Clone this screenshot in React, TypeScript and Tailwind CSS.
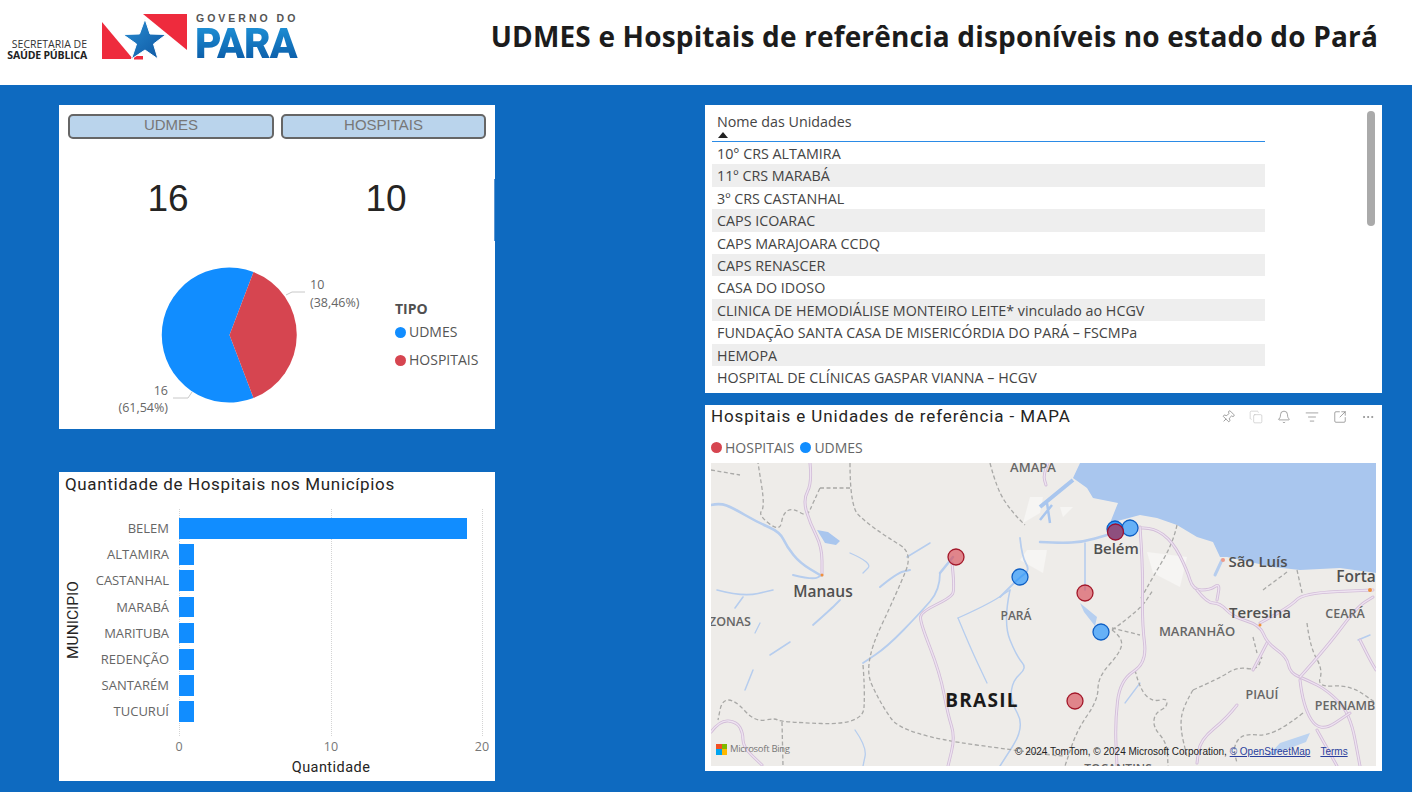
import React from "react";
import { Pin, Copy, Bell, ListFilter, SquareArrowOutUpRight, MoreHorizontal } from "lucide-react";

const rows = [
  "10° CRS ALTAMIRA",
  "11º CRS MARABÁ",
  "3º CRS CASTANHAL",
  "CAPS ICOARAC",
  "CAPS MARAJOARA CCDQ",
  "CAPS RENASCER",
  "CASA DO IDOSO",
  "CLINICA DE HEMODIÁLISE MONTEIRO LEITE* vinculado ao HCGV",
  "FUNDAÇÃO SANTA CASA DE MISERICÓRDIA DO PARÁ – FSCMPa",
  "HEMOPA",
  "HOSPITAL DE CLÍNICAS GASPAR VIANNA – HCGV",
];

const bars: [string, number][] = [
  ["BELEM", 19],
  ["ALTAMIRA", 1],
  ["CASTANHAL", 1],
  ["MARABÁ", 1],
  ["MARITUBA", 1],
  ["REDENÇÃO", 1],
  ["SANTARÉM", 1],
  ["TUCURUÍ", 1],
];

function Logo() {
  return (
    <div className="flex items-start">
      <div className="w-[87px] mt-[39px] text-right text-[10.500px] leading-[11px] text-[#333] whitespace-nowrap font-['Open_Sans',sans-serif]">
        <div className="tracking-[0px]">SECRETARIA DE</div>
        <div className="font-bold text-[#222] tracking-[-0.2px]">SAÚDE PÚBLICA</div>
      </div>
      <svg width="90" height="50" viewBox="100 12 90 50" className="ml-[13px] mt-[12px] shrink-0">
        <defs>
          <linearGradient id="star" x1="0" y1="0" x2="1" y2="1">
            <stop offset="0" stopColor="#2a8fd4" />
            <stop offset="1" stopColor="#0d55a0" />
          </linearGradient>
        </defs>
        <polygon points="102,22 102,59 133,59" fill="#ee2b3d" />
        <polygon points="143,14 187,14 187,50" fill="#ee2b3d" />
        <polygon points="134,56 143,56 143,59.500 134,59.500" fill="#ee2b3d" />
        <polygon
          points="145,19 150,34 166,34.500 153.500,44 158,59 145,50 131.500,59 136.500,44 123,34.500 139.500,34"
          fill="url(#star)"
          stroke="#fff"
          strokeWidth="1"
        />
      </svg>
      <div className="ml-[5px] mt-[13px] w-[106px] relative">
        <div className="pl-[1px] text-[10.500px] leading-[11px] font-bold tracking-[3px] text-[#555] whitespace-nowrap font-['Liberation_Sans',sans-serif]">
          GOVERNO DO
        </div>
        <div className="text-[43px] leading-[38px] font-black tracking-[-1px] text-transparent bg-clip-text bg-gradient-to-b from-[#1f93d8] to-[#0b5aa6] whitespace-nowrap font-['Roboto',sans-serif] scale-x-[0.95] origin-left w-[112px]">
          PARA
        </div>
        <span className="absolute left-[95px] top-[16px] h-[9px] w-[2px] bg-white -rotate-[14deg]" />
      </div>
    </div>
  );
}

function Header() {
  return (
    <header className="h-[85px] bg-white flex items-start justify-between pr-[34px]">
      <Logo />
      <h1 className="mt-[16px] text-[28px] leading-[40px] font-bold tracking-[0.17px] text-[#1c1c1c] whitespace-nowrap font-['Open_Sans',sans-serif]">
        UDMES e Hospitais de referência disponíveis no estado do Pará
      </h1>
    </header>
  );
}

function PiePanel() {
  return (
    <section className="relative h-[324px] bg-white">
      <span className="absolute right-0 top-[74px] h-[62px] w-[1px] bg-[#5b95d0]" />
      <div className="flex gap-[7px] pt-[9px] pl-[9px] font-['Liberation_Sans',sans-serif]">
        <button className="w-[206px] h-[25px] pb-[3px] rounded-[5px] border-2 border-[#666] bg-[#bad4ec] text-[15px] leading-[18px] text-[#777]">
          UDMES
        </button>
        <button className="w-[205px] h-[25px] pb-[3px] rounded-[5px] border-2 border-[#666] bg-[#bad4ec] text-[15px] leading-[18px] text-[#777]">
          HOSPITAIS
        </button>
      </div>
      <div className="grid grid-cols-2 mt-[40px] text-center text-[37px] leading-[40px] text-[#252423] font-['Liberation_Sans',sans-serif]">
        <div>16</div>
        <div>10</div>
      </div>
      <div className="flex mt-[36px]">
        <svg width="271" height="174" viewBox="109 255 271 174" className="ml-[50px] shrink-0 font-['Open_Sans',sans-serif]">
          <path d="M229.500 335 L253.500 272 A67.500 67.500 0 1 0 253.500 398 Z" fill="#118dff" />
          <path d="M229.500 335 L253.500 272 A67.500 67.500 0 0 1 253.500 398 Z" fill="#d64550" />
          <polyline points="286,295 292,292 305,292" fill="none" stroke="#c8c8c8" />
          <polyline points="173,398 188,398 192,392" fill="none" stroke="#c8c8c8" />
          <text x="310" y="289" fontSize="12.500" fill="#666">10</text>
          <text x="310" y="307" fontSize="12.500" fill="#666">(38,46%)</text>
          <text x="168" y="395" fontSize="12.500" fill="#666" textAnchor="end">16</text>
          <text x="168" y="412" fontSize="12.500" fill="#666" textAnchor="end">(61,54%)</text>
        </svg>
        <div className="ml-[15px] pt-[44px] font-['Open_Sans',sans-serif] text-[14px] text-[#555]">
          <div className="font-bold leading-[20px] text-[#505050]">TIPO</div>
          <div className="mt-[3px] flex items-center gap-[3px] leading-[20px]">
            <span className="w-[11px] h-[11px] rounded-full bg-[#118dff]" />
            UDMES
          </div>
          <div className="mt-[8px] flex items-center gap-[3px] leading-[20px]">
            <span className="w-[11px] h-[11px] rounded-full bg-[#d64550]" />
            HOSPITAIS
          </div>
        </div>
      </div>
    </section>
  );
}

function BarPanel() {
  return (
    <section className="relative h-[309px] mt-[43px] bg-white">
      <h2 className="pl-[6px] pt-[1px] text-[17px] leading-[22px] tracking-[0.65px] text-[#252423] whitespace-nowrap font-['Roboto',sans-serif]">
        Quantidade de Hospitais nos Municípios
      </h2>
      <div className="absolute left-[120px] top-[37px] h-[227px] w-[303px]">
        <span className="absolute left-0 top-0 h-full border-l border-dotted border-[#d4d4d4]" />
        <span className="absolute left-[152px] top-0 h-full border-l border-dotted border-[#d4d4d4]" />
        <span className="absolute left-[303px] top-0 h-full border-l border-dotted border-[#d4d4d4]" />
      </div>
      <span className="absolute left-[14px] top-[148px] -translate-x-1/2 -translate-y-1/2 -rotate-90 text-[15.500px] leading-[16px] text-[#252423] whitespace-nowrap font-['Roboto',sans-serif]">
        MUNICIPIO
      </span>
      <div className="relative mt-[23px] flex flex-col gap-[5.500px] font-['Open_Sans',sans-serif]">
        {bars.map(([name, v]) => (
          <div key={name} className="flex items-start h-[20.700px]">
            <div className="w-[110px] text-right text-[13px] leading-[21px] text-[#666] whitespace-nowrap">
              {name}
            </div>
            <div className="ml-[10px] h-full bg-[#118dff]" style={{ width: v * 15.15 }} />
          </div>
        ))}
      </div>
      <div className="relative h-[16px] mt-[17px] text-[12.500px] leading-[16px] text-[#777] font-['Open_Sans',sans-serif]">
        <span className="absolute left-[120px] -translate-x-1/2">0</span>
        <span className="absolute left-[272px] -translate-x-1/2">10</span>
        <span className="absolute left-[423px] -translate-x-1/2">20</span>
      </div>
      <div className="ml-[120px] w-[304px] mt-[4px] text-center text-[14.500px] leading-[18px] tracking-[0.45px] text-[#252423] font-['Roboto',sans-serif]">
        Quantidade
      </div>
    </section>
  );
}

function TablePanel() {
  return (
    <section className="relative h-[288px] bg-white overflow-hidden font-['Open_Sans',sans-serif]">
      <span className="absolute right-[7px] top-[6px] w-[8px] h-[115px] rounded-full bg-[#aaaaaa]" />
      <div className="ml-[7px] w-[553px] pt-[6px]">
        <div className="relative h-[31px] border-b border-[#2b8be6] pl-[5px] text-[14.300px] leading-[21px] text-[#444]">
          Nome das Unidades
          <span className="absolute left-[6px] top-[21px] w-0 h-0 border-l-[5px] border-r-[5px] border-b-[6px] border-l-transparent border-r-transparent border-b-[#222]" />
        </div>
        {rows.map((r, i) => (
          <div
            key={r}
            className={`h-[22.400px] pl-[5px] text-[14.300px] leading-[24px] text-[#444] whitespace-nowrap ${i % 2 === 1 ? "bg-[#eeeeee]" : "bg-white"}`}
          >
            {r}
          </div>
        ))}
      </div>
    </section>
  );
}

// turns a list of points into a rounded line through their midpoints
function smooth(d: string) {
  return d
    .split("M")
    .filter((s) => s.trim())
    .map((seg) => {
      const n = seg.replace(/L/g, " ").trim().split(/\s+/).map(Number);
      const p: [number, number][] = [];
      for (let i = 0; i + 1 < n.length; i += 2) p.push([n[i], n[i + 1]]);
      let out = `M${p[0][0]} ${p[0][1]}`;
      for (let i = 1; i < p.length - 1; i++) {
        const mx = (p[i][0] + p[i + 1][0]) / 2;
        const my = (p[i][1] + p[i + 1][1]) / 2;
        out += ` Q${p[i][0]} ${p[i][1]} ${mx} ${my}`;
      }
      const l = p[p.length - 1];
      return out + ` L${l[0]} ${l[1]}`;
    })
    .join(" ");
}

function MapDrawing() {
  const roads = [
    "M810 463 L812 483 L803 500 L810 523 L822 547 L822 575",
    "M952 563 L955 590 L950 598 L921 612 L920 622 L940 673 L948 715 L955 737 L948 766",
    "M1140 528 L1153 527 L1173 542 L1187 570 L1193 590 L1210 590 L1220 583 L1217 600",
    "M1140 527 L1143 567 L1142 623 L1147 663 L1120 680 L1115 723 L1117 766",
    "M1197 590 L1207 603 L1220 603 L1233 617 L1260 625 L1267 643 L1287 657 L1290 673 L1307 680 L1327 690 L1350 713 L1360 766",
    "M1260 623 L1290 607 L1303 593 L1373 590",
    "M1267 643 L1253 670",
    "M1300 677 L1327 647 L1357 607 L1373 597",
    "M1300 680 L1303 707 L1320 733 L1350 713",
    "M1317 730 L1337 766",
    "M1237 705 L1227 718 L1200 740 L1197 763",
    "M711 732 L720 720 L737 722 L743 733 L743 747 L762 765",
    "M1048 463 L1043 475 L1046 485",
    "M1360 640 L1370 660 L1376 670",
  ];
  const rivers: [string, number][] = [
    ["M711 505 L720 503 L733 508 L757 522 L780 532 L787 547 L800 563 L820 575", 2.6],
    ["M793 575 L813 580 L822 575", 2],
    ["M717 590 L743 597 L773 590", 1.6],
    ["M743 597 L735 608", 1.6],
    ["M850 553 L873 563 L863 573", 1.3],
    ["M880 587 L897 573 L910 570", 2],
    ["M907 557 L930 543", 1.5],
    ["M940 573 L953 557", 2.5],
    ["M940 573 L940 590 L920 613 L887 647 L863 663", 1.8],
    ["M813 625 L830 610 L840 600", 1.8],
    ["M770 655 L790 642", 1.5],
    ["M745 690 L753 670", 1.5],
    ["M760 623 L755 633", 1.3],
    ["M855 730 L867 747 L863 766", 1.3],
    ["M958 618 L987 605 L1010 590", 1.3],
    ["M958 618 L970 647 L987 683", 1.3],
    ["M1010 590 L1003 623 L1017 657 L1027 668 L1013 680 L1010 700 L1025 727 L1000 766", 1.5],
    ["M1020 538 L1022 557 L1030 570 L1020 577 L1000 597", 1.8],
    ["M1040 542 L1060 543 L1083 542 L1107 535", 2.5],
    ["M1085 543 L1085 577 L1085 590", 1.6],
    ["M1125 703 L1140 683", 1.3],
    ["M1222 560 L1215 575", 3],
    ["M1370 635 L1358 640", 1.5],
  ];
  const borders = [
    "M850 463 L850 507 L867 523 L887 537 L913 553 L898 590 L863 665 L880 703 L903 735 L1050 755 L1063 756",
    "M820 488 L850 488 M820 488 L813 503 L807 517 L793 508 L783 513 L780 532 L758 515 L765 507 L758 463",
    "M990 463 L997 490 L1013 513 L1025 525",
    "M711 470 L740 475",
    "M863 665 L865 690 L863 725 L780 722 L775 718 L755 722 L735 700 L722 700 L718 720",
    "M782 722 L783 766",
    "M1112 630 L1140 610 L1153 590",
    "M1112 630 L1123 638 L1120 653 L1098 677 L1098 700 L1077 730 L1065 766",
    "M1112 628 L1140 635",
    "M1135 670 L1140 690 L1153 702 L1167 698 L1167 707 L1155 713 L1153 727 L1167 743 L1168 766",
    "M1193 690 L1183 707 L1180 727 L1187 757",
    "M1193 690 L1220 678 L1237 667 L1257 670 L1262 657",
    "M1253 637 L1257 653",
    "M1307 623 L1310 647 L1323 670 L1317 687 L1350 685 L1376 703",
    "M1303 713 L1273 737 L1243 733 L1233 747 L1237 763",
    "M1177 525 L1173 543 L1153 577 L1140 600",
    "M1287 572 L1263 590",
    "M1297 570 L1303 597",
  ];
  const labels: [string, number, number, number, number, string][] = [
    ["AMAPÁ", 1033, 472, 13, 600, "#666"],
    ["Manaus", 823, 597, 15.5, 600, "#505050"],
    ["Belém", 1116, 554, 15, 600, "#505050"],
    ["São Luís", 1258, 567, 15, 600, "#505050"],
    ["Forta", 1356, 582, 15.5, 600, "#505050"],
    ["Teresina", 1260, 618, 15, 600, "#505050"],
    ["CEARÁ", 1345, 618, 12.5, 600, "#666"],
    ["ZONAS", 730, 626, 12.5, 600, "#666"],
    ["PARÁ", 1016, 620, 12, 600, "#666"],
    ["MARANHÃO", 1197, 636, 13, 600, "#666"],
    ["BRASIL", 982, 707, 19, 700, "#1a1a1a"],
    ["PIAUÍ", 1262, 699, 12.5, 600, "#666"],
    ["PERNAMB", 1345, 710, 12.5, 600, "#666"],
    ["TOCANTINS", 1118, 773, 12, 600, "#666"],
  ];
  const pts: [number, number, string, string, number][] = [
    [956, 557, "#d64550", "#a3182a", 0.62],
    [1020, 577, "#118dff", "#0f5fc4", 0.62],
    [1085, 593, "#d64550", "#a3182a", 0.62],
    [1101, 632, "#118dff", "#0f5fc4", 0.62],
    [1075, 701, "#d64550", "#a3182a", 0.62],
    [1115, 529, "#118dff", "#0f5fc4", 0.85],
    [1130, 528, "#118dff", "#0f5fc4", 0.62],
    [1115.5, 532, "#8e4f7e", "#9a1030", 1],
  ];
  return (
    <svg width="665" height="303" viewBox="711 463 665 303" className="block font-['Open_Sans',sans-serif]">
      <defs>
        <filter id="soft" x="0" y="0" width="1" height="1">
          <feGaussianBlur stdDeviation="0.4" />
        </filter>
      </defs>
      <rect x="711" y="463" width="665" height="303" fill="#eeece9" />
      <g filter="url(#soft)">
        <polygon
          points="1080,463 1073,478 1087,488 1093,498 1118,503 1110,523 1140,515 1157,518 1177,525 1197,537 1213,542 1220,557 1227,557 1273,567 1300,570 1340,568 1376,573 1376,463"
          fill="#a9c6ee"
        />
        <polygon points="1147,552 1187,557 1180,587 1153,573" fill="#f6f5f3" />
        <polygon points="1030,497 1043,497 1040,513 1023,523" fill="#f6f5f3" />
        <polygon points="1027,550 1047,550 1043,573 1020,560" fill="#f6f5f3" />
        <polygon points="1060,507 1073,507 1063,517" fill="#f6f5f3" />
        <path d={smooth("M1040 507 L1057 493 L1073 480")} stroke="#a9c6ee" strokeWidth="4" fill="none" />
        <path d={smooth("M1047 503 L1050 523 M1040 520 L1052 505")} stroke="#a9c6ee" strokeWidth="2.5" fill="none" />
        <path d="M817 530 L828 532 L840 541 L836 545 L825 543 Z" fill="#a9c6ee" />
        <path d="M1080 603 L1097 617 L1095 626 L1084 612 Z" fill="#b6cff0" />
        <path d="M1267 757 L1280 743 L1310 733 L1306 742 L1285 750 Z" fill="#bcd3f0" />
        {rivers.map(([d, w], i) => (
          <path key={i} d={smooth(d)} fill="none" stroke="#b6cdee" strokeWidth={w} strokeLinecap="round" />
        ))}
        {borders.map((d, i) => (
          <path key={i} d={smooth(d)} fill="none" stroke="#a9a9a7" strokeWidth="1.3" strokeDasharray="4 2.5" />
        ))}
        {roads.map((d, k) => (
          <g key={k} fill="none" strokeLinejoin="round" strokeLinecap="round">
            <path d={smooth(d)} stroke="#d2bdd8" strokeWidth="3" />
            <path d={smooth(d)} stroke="#eee3f1" strokeWidth="1.3" />
          </g>
        ))}
      </g>
      <circle cx="822" cy="575" r="1.5" fill="#f0923c" />
      <circle cx="1223" cy="560" r="2" fill="#ee9a8a" />
      <circle cx="1260" cy="625" r="1.5" fill="#f0923c" />
      <circle cx="1370" cy="590" r="2" fill="#f0923c" />
      {labels.map(([t, x, y, s, w, c]) => (
        <text key={t} x={x} y={y} fontSize={s} fontWeight={w} fill={c} textAnchor="middle" letterSpacing={t === "BRASIL" ? 1.3 : 0}>
          {t}
        </text>
      ))}
      {pts.map(([x, y, f, s, o], i) => (
        <circle key={i} cx={x} cy={y} r="8" fill={f} fillOpacity={o} stroke={s} strokeWidth="1.3" />
      ))}
    </svg>
  );
}

function MapPanel() {
  const ic = "w-[14px] h-[14px] text-[#666]";
  return (
    <section className="relative h-[366px] mt-[12px] bg-white px-[6px]">
      <div className="flex justify-between h-[22px]">
        <h2 className="text-[17px] leading-[22px] tracking-[0.9px] text-[#252423] whitespace-nowrap font-['Roboto',sans-serif]">
          Hospitais e Unidades de referência - MAPA
        </h2>
        <div className="flex gap-[14px] pt-[5px] pr-[1px]">
          <Pin className={ic + " rotate-45"} strokeWidth={1} />
          <Copy className="w-[14px] h-[14px] text-[#bbb]" strokeWidth={1} />
          <Bell className={ic} strokeWidth={1} />
          <ListFilter className={ic} strokeWidth={1} />
          <SquareArrowOutUpRight className={ic} strokeWidth={1} />
          <MoreHorizontal className="w-[14px] h-[14px] text-[#888]" strokeWidth={1.5} />
        </div>
      </div>
      <div className="flex items-center h-[36px] pt-[5px] text-[14px] text-[#666] font-['Open_Sans',sans-serif]">
        <span className="w-[11px] h-[11px] rounded-full bg-[#d64550] mr-[3px]" />
        HOSPITAIS
        <span className="w-[11px] h-[11px] rounded-full bg-[#118dff] ml-[6px] mr-[3px]" />
        UDMES
      </div>
      <div className="relative h-[303px] overflow-hidden">
        <MapDrawing />
        <div className="absolute left-[5px] bottom-[11px] flex items-center gap-[3px] text-[9.500px] leading-[12px] text-[#777] tracking-[-0.3px] font-['Open_Sans',sans-serif]">
          <span className="grid grid-cols-2 w-[11px] h-[11px]">
            <i className="bg-[#f25022]" />
            <i className="bg-[#7fba00]" />
            <i className="bg-[#00a4ef]" />
            <i className="bg-[#ffb900]" />
          </span>
          Microsoft Bing
        </div>
        <div className="absolute left-[304px] top-[283px] flex text-[10px] leading-[12px] text-[#222] whitespace-nowrap font-['Liberation_Sans',sans-serif]">
          <span>© 2024 TomTom, © 2024 Microsoft Corporation,&nbsp;</span>
          <span className="underline text-[#2a3f9d]">© OpenStreetMap</span>
          <span className="ml-[10px] underline text-[#2a3f9d]">Terms</span>
        </div>
      </div>
    </section>
  );
}

export default function App() {
  return (
    <div className="w-[1412px] h-[792px] overflow-hidden bg-[#0e6ac0]">
      <Header />
      <main className="flex gap-[210px] pl-[59px] pt-[20px]">
        <div className="w-[436px]">
          <PiePanel />
          <BarPanel />
        </div>
        <div className="w-[677px]">
          <TablePanel />
          <MapPanel />
        </div>
      </main>
    </div>
  );
}
